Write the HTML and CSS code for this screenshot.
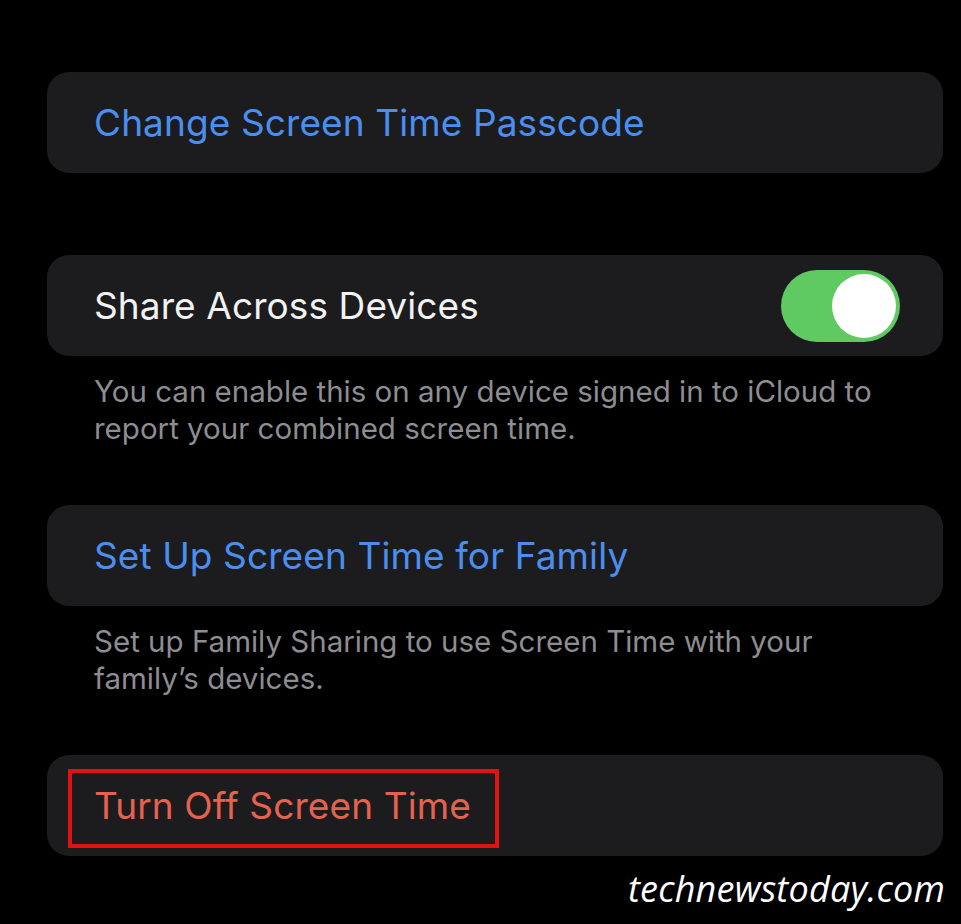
FILE: index.html
```html
<!DOCTYPE html>
<html lang="en">
<head>
  <meta charset="UTF-8">
  <title>Screen Time</title>
  <meta name="viewport" content="width=device-width, initial-scale=1.0">
  <link rel="stylesheet" href="styles.css">
</head>
<body>

  <main class="settings">
    <section class="group">
      <div class="cell">
        <span class="link">Change Screen Time Passcode</span>
      </div>
    </section>

    <section class="group">
      <div class="cell">
        <span class="label">Share Across Devices</span>
        <span class="toggle on"><span class="knob"></span></span>
      </div>
      <p class="footnote">You can enable this on any device signed in to iCloud to report your combined screen time.</p>
    </section>

    <section class="group">
      <div class="cell">
        <span class="link">Set Up Screen Time for Family</span>
      </div>
      <p class="footnote">Set up Family Sharing to use Screen Time with your family’s devices.</p>
    </section>

    <section class="group">
      <div class="cell">
        <span class="highlight"><span class="danger">Turn Off Screen Time</span></span>
      </div>
    </section>
  </main>

  <div class="brand">technewstoday.com</div>

</body>
</html>
```

FILE: styles.css
```css
body {
  margin: 0;
  background-color: #000;
  font-family: Inter, 'Noto Sans', sans-serif;
  width: 961px;
  height: 924px;
  overflow: hidden;
  position: relative;
}

.settings {
  padding: 72px 18px 0 47px;
}

.group {
  margin-bottom: 82px;
}

.cell {
  background-color: #1c1c1e;
  border-radius: 22px;
  height: 101px;
  display: flex;
  align-items: center;
  justify-content: space-between;
  padding: 0 43px 0 47px;
  box-sizing: border-box;
}

.link {
  color: #4a8ff0;
  font-size: 37px;
  letter-spacing: 0.1px;
}

.label {
  color: #f2f2f2;
  font-size: 37px;
  letter-spacing: 0.1px;
}

.toggle {
  width: 119px;
  height: 72px;
  border-radius: 36px;
  background-color: #5fc962;
  display: flex;
  align-items: center;
  justify-content: flex-end;
  padding: 0 4px;
  box-sizing: border-box;
}

.knob {
  width: 64px;
  height: 64px;
  border-radius: 50%;
  background-color: #fff;
}

.footnote {
  color: #8d8d92;
  font-size: 29.5px;
  line-height: 37px;
  margin: 17px 40px 0 47px;
}

.group:has(.footnote) {
  margin-bottom: 58px;
}

.highlight {
  display: flex;
  align-items: center;
  height: 79px;
  box-sizing: border-box;
  margin: 6px 0 0 -26px;
  padding: 0 24px 6px 22px;
  border: 4px solid #e01212;
}

.danger {
  color: #e5624f;
  font-size: 37px;
  letter-spacing: 0.1px;
}

.brand {
  position: absolute;
  right: 16px;
  top: 864px;
  color: #fff;
  font-family: 'Open Sans', sans-serif;
  font-style: italic;
  font-size: 36px;
  letter-spacing: 0.2px;
}
```
